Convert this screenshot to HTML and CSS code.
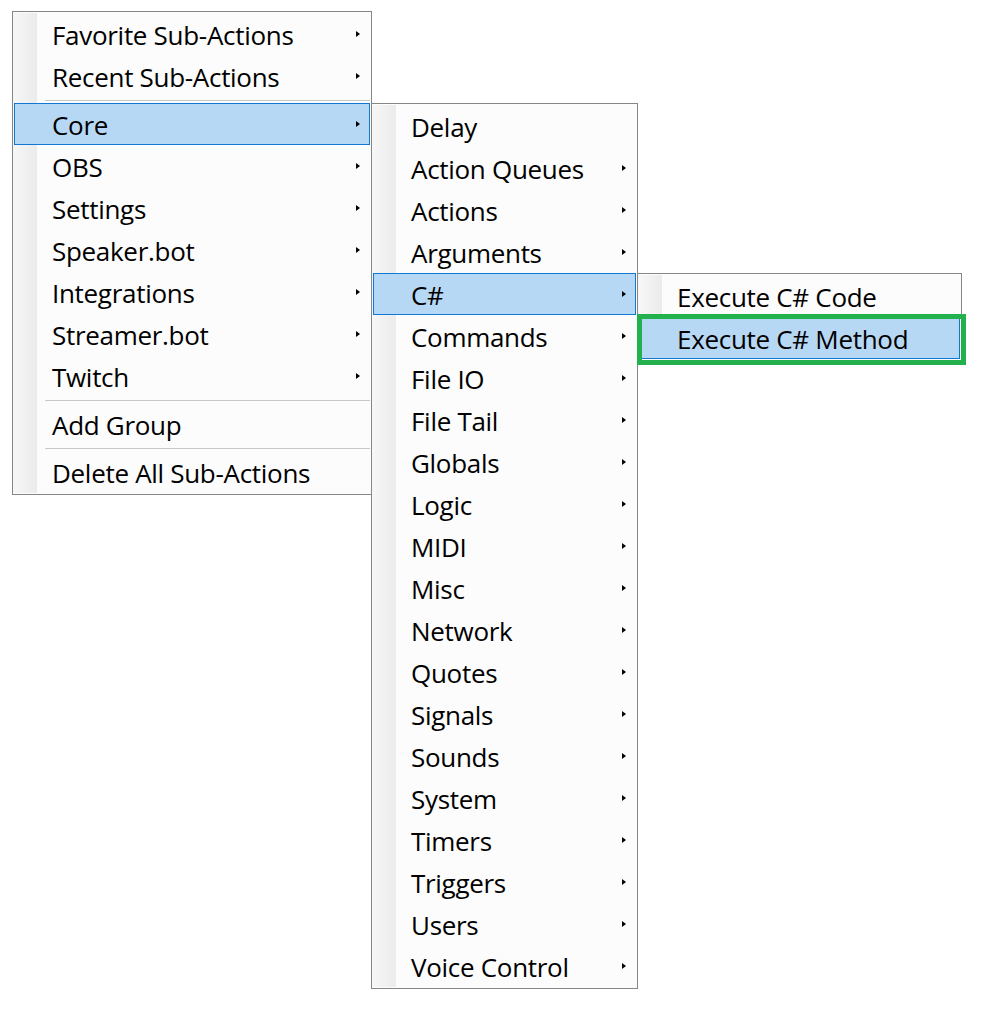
FILE: index.html
```html
<!DOCTYPE html>
<html>
<head>
<meta charset="utf-8">
<link rel="stylesheet" href="styles.css">
</head>
<body>
<div class="desktop">
  <div class="menu menu-main">
    <ul class="menu-list">
      <li class="item sub"><span>Favorite Sub-Actions</span><i class="arrow"></i></li>
      <li class="item sub"><span>Recent Sub-Actions</span><i class="arrow"></i></li>
      <li class="sep"></li>
      <li class="item sub active"><span>Core</span><i class="arrow"></i></li>
      <li class="item sub"><span>OBS</span><i class="arrow"></i></li>
      <li class="item sub"><span>Settings</span><i class="arrow"></i></li>
      <li class="item sub"><span>Speaker.bot</span><i class="arrow"></i></li>
      <li class="item sub"><span>Integrations</span><i class="arrow"></i></li>
      <li class="item sub"><span>Streamer.bot</span><i class="arrow"></i></li>
      <li class="item sub"><span>Twitch</span><i class="arrow"></i></li>
      <li class="sep"></li>
      <li class="item"><span>Add Group</span></li>
      <li class="sep"></li>
      <li class="item"><span>Delete All Sub-Actions</span></li>
    </ul>
  </div>

  <div class="menu menu-core">
    <ul class="menu-list">
      <li class="item"><span>Delay</span></li>
      <li class="item sub"><span>Action Queues</span><i class="arrow"></i></li>
      <li class="item sub"><span>Actions</span><i class="arrow"></i></li>
      <li class="item sub"><span>Arguments</span><i class="arrow"></i></li>
      <li class="item sub active"><span>C#</span><i class="arrow"></i></li>
      <li class="item sub"><span>Commands</span><i class="arrow"></i></li>
      <li class="item sub"><span>File IO</span><i class="arrow"></i></li>
      <li class="item sub"><span>File Tail</span><i class="arrow"></i></li>
      <li class="item sub"><span>Globals</span><i class="arrow"></i></li>
      <li class="item sub"><span>Logic</span><i class="arrow"></i></li>
      <li class="item sub"><span>MIDI</span><i class="arrow"></i></li>
      <li class="item sub"><span>Misc</span><i class="arrow"></i></li>
      <li class="item sub"><span>Network</span><i class="arrow"></i></li>
      <li class="item sub"><span>Quotes</span><i class="arrow"></i></li>
      <li class="item sub"><span>Signals</span><i class="arrow"></i></li>
      <li class="item sub"><span>Sounds</span><i class="arrow"></i></li>
      <li class="item sub"><span>System</span><i class="arrow"></i></li>
      <li class="item sub"><span>Timers</span><i class="arrow"></i></li>
      <li class="item sub"><span>Triggers</span><i class="arrow"></i></li>
      <li class="item sub"><span>Users</span><i class="arrow"></i></li>
      <li class="item sub"><span>Voice Control</span><i class="arrow"></i></li>
    </ul>
  </div>

  <div class="menu menu-csharp">
    <ul class="menu-list">
      <li class="item"><span>Execute C# Code</span></li>
      <li class="item active"><span>Execute C# Method</span></li>
    </ul>
  </div>

  <div class="callout"></div>
</div>
</body>
</html>
```

FILE: styles.css
```css
* {
  box-sizing: border-box;
}

html, body {
  margin: 0;
  padding: 0;
  background: #ffffff;
}

body {
  font-family: "Open Sans", "Noto Sans", "Liberation Sans", sans-serif;
  font-size: 26px;
  color: #000000;
}

.desktop {
  position: relative;
  width: 983px;
  height: 1014px;
}

.menu {
  position: absolute;
  border: 1px solid #868686;
  padding: 1px;
  background:
    linear-gradient(to right, #f7f7f7, #ebebeb) no-repeat 0 1px / 24px calc(100% - 2px),
    #fcfcfc;
}

.menu-main {
  left: 12px;
  top: 11px;
  width: 360px;
}

.menu-core {
  left: 371px;
  top: 103px;
  width: 267px;
}

.menu-csharp {
  left: 637px;
  top: 273px;
  width: 325px;
}

.menu-list {
  list-style: none;
  margin: 0;
  padding: 0;
}

.item {
  display: flex;
  align-items: center;
  justify-content: space-between;
  height: 42px;
  padding: 0 10px 0 38px;
  white-space: nowrap;
}

.item span {
  display: block;
  height: 42px;
  padding-top: 2px;
  line-height: 40px;
  letter-spacing: -0.3px;
}

.item.active {
  background: #b7d8f4;
  box-shadow: inset 0 0 0 1px #0f78d4;
}

.arrow {
  display: block;
  width: 0;
  height: 0;
  border-left: 4px solid #000000;
  border-top: 3.5px solid transparent;
  border-bottom: 3.5px solid transparent;
}

.sep {
  height: 6px;
  margin-left: 31px;
  padding-top: 3px;
}

.sep::after {
  content: "";
  display: block;
  height: 1px;
  background: #c8c8c8;
}

.callout {
  position: absolute;
  left: 637px;
  top: 314px;
  width: 329px;
  height: 51px;
  border: 5px solid #22b14c;
}
```
